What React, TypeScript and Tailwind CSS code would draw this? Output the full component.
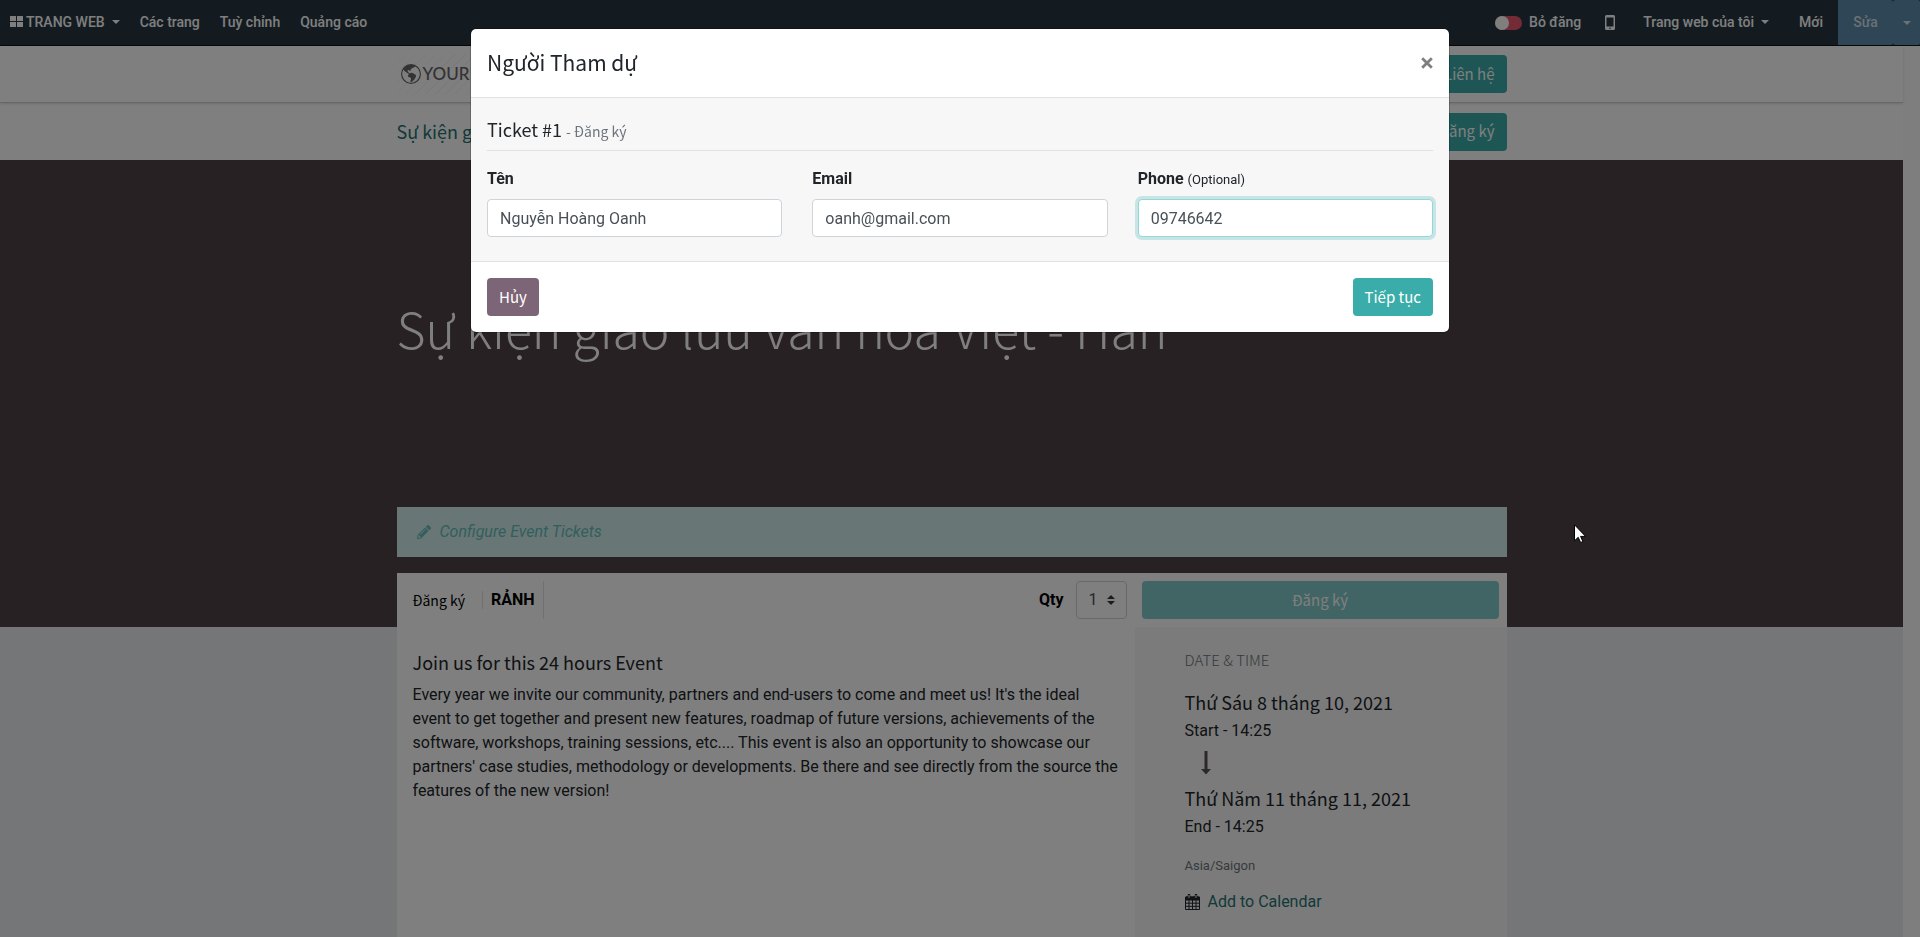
import React from "react";
import { BsGlobeAmericas } from "react-icons/bs";
import { FaPencilAlt } from "react-icons/fa";

const display = "font-['Noto_Sans_CJK_SC',sans-serif]";
const heading = "pb-0.5 text-lg leading-[22px]";
const buttonText = "text-[15px]";

function Caret() {
  return (
    <span
      aria-hidden="true"
      className="ml-[7px] inline-block h-0 w-0 border-x-4 border-t-4 border-x-transparent border-t-current"
    />
  );
}

function TopBar() {
  return (
    <nav className="flex h-[46px] items-stretch justify-between border-b border-[#0c1419] bg-[#263642] text-sm font-medium text-white">
      <div className="flex items-center gap-5 pl-2.5 pb-0.5">
        <button className="flex items-center">
          <svg aria-hidden="true" className="mr-[3px] h-[11px] w-[13px]" viewBox="0 0 13 11" fill="currentColor">
            <path d="M0 0h6v5H0zM7 0h6v5H7zM0 6h6v5H0zM7 6h6v5H7z" />
          </svg>
          TRANG WEB
          <Caret />
        </button>
        <a href="#pages">Các trang</a>
        <a href="#customize">Tuỳ chỉnh</a>
        <a href="#promote">Quảng cáo</a>
      </div>
      <div className="flex items-center">
        <label className="flex items-center pb-0.5">
          <input type="checkbox" role="switch" className="peer sr-only" />
          <span className="mr-[7px] mt-0.5 flex h-3.5 w-[27px] rounded-full bg-[#e6586c]">
            <span className="h-3.5 w-3.5 rounded-full bg-white" />
          </span>
          Bỏ đăng
        </label>
        <button aria-label="Mobile preview" className="ml-6 mr-7">
          <svg className="h-[15px] w-[10px]" viewBox="0 0 10 15">
            <path
              fill="currentColor"
              fillRule="evenodd"
              d="M1.5 0h7A1.5 1.5 0 0 1 10 1.500v12A1.500 1.500 0 0 1 8.500 15h-7A1.500 1.500 0 0 1 0 13.500v-12A1.500 1.500 0 0 1 1.500 0zM1.500 2.500v9h7v-9zM5 12.500a.8.8 0 1 0 0 1.600.8.8 0 0 0 0-1.600z"
            />
          </svg>
        </button>
        <button className="flex items-center pb-0.5">
          Trang web của tôi
          <Caret />
        </button>
        <a href="#new" className="ml-[30px] mr-[15px] pb-0.5">
          Mới
        </a>
        <div className="flex h-full text-[#ffffffc0]">
          <button className="w-[55px] rounded-r-xs bg-[#5c8cac] pb-0.5">Sửa</button>
          <button
            aria-label="More edit options"
            className="flex w-[27px] items-center justify-center rounded-xs bg-[#5c8cac]"
          >
            <span className="h-0 w-0 border-x-4 border-t-4 border-x-transparent border-t-current" />
          </button>
        </div>
      </div>
    </nav>
  );
}

function PageHeader() {
  return (
    <header className="relative border-b border-[#cfcfcf] bg-white shadow-sm">
      <div className="mx-auto flex h-14 w-full max-w-[1110px] items-center justify-between">
        <a
          href="#home"
          className="flex h-10 items-center gap-0.5 bg-[repeating-linear-gradient(135deg,#fff_0_6px,#f6f6f6_6px_7px)] px-1 font-['Lato',sans-serif] text-[17px] font-medium text-[#666]"
        >
          <BsGlobeAmericas aria-hidden="true" className="h-5 w-5" />
          YOUR LOGO
        </a>
        <a href="#contact" className={`${display} ${buttonText} flex h-[38px] items-center rounded bg-[#3aadaa] px-3 text-white`}>
          Liên hệ
        </a>
      </div>
    </header>
  );
}

function EventBar() {
  return (
    <div className="bg-white">
      <div className="mx-auto flex h-[57px] w-full max-w-[1110px] items-center justify-between">
        <a href="#event" className={`${display} ${heading} text-[#267372]`}>
          Sự kiện giao lưu văn hóa Việt - Hàn
        </a>
        <button className={`${display} ${buttonText} h-[38px] rounded bg-[#3aadaa] px-3 text-white`}>Đăng ký</button>
      </div>
    </div>
  );
}

function EventDate({ date, time }: { date: string; time: string }) {
  return (
    <div>
      <h5 className={`${display} ${heading} mb-[3px]`}>{date}</h5>
      <p className="text-base leading-[26px]">{time}</p>
    </div>
  );
}

function EventPage() {
  return (
    <main className="flex flex-1 flex-col bg-[linear-gradient(#4e4248_467px,#e9ecef_467px)]">
      <div className="mx-auto flex w-full max-w-[1110px] flex-1 flex-col">
        <h1 className={`${display} flex h-[347px] items-center pb-3 text-[50px] font-light text-white`}>
          Sự kiện giao lưu văn hóa Việt - Hàn
        </h1>
        <a href="#tickets" className="flex h-[50px] items-center gap-[9px] bg-[#d1eeed] px-5 text-base italic text-[#66bdba]">
          <FaPencilAlt aria-hidden="true" className="h-3.5 w-3.5" />
          Configure Event Tickets
        </a>
        <section className="mt-4 flex flex-1 flex-col bg-white text-[#212529]">
          <form className="flex h-[54px] items-center justify-between p-2">
            <div className="flex items-center pl-2 text-black">
              <span className={`${display} text-sm`}>Đăng ký</span>
              <span className="ml-[17px] h-[18px] border-l border-[#dee2e6]" />
              <span className="flex h-[38px] items-center border-r border-[#dee2e6] px-2 font-bold">RẢNH</span>
            </div>
            <div className="flex items-center">
              <label htmlFor="qty" className="mr-3 font-bold text-black">
                Qty
              </label>
              <span className="relative flex">
                <select
                  id="qty"
                  defaultValue="1"
                  className="h-[38px] w-[51px] appearance-none rounded border border-[#ced4da] bg-white pl-3 text-[#495057]"
                >
                  <option>1</option>
                  <option>2</option>
                  <option>3</option>
                </select>
                <svg aria-hidden="true" className="pointer-events-none absolute right-3 top-3.5 h-2.5 w-2" viewBox="0 0 4 5">
                  <path fill="#343a40" d="M2 0L0 2h4zm0 5L0 3h4z" />
                </svg>
              </span>
              <button
                type="button"
                className={`${display} ${buttonText} ml-[15px] h-[38px] w-[357px] rounded bg-[#83cac9] text-white`}
              >
                Đăng ký
              </button>
            </div>
          </form>
          <div className="flex flex-1">
            <article className="flex-1 px-4 pt-6">
              <h2 className={`${display} ${heading} mb-2`}>Join us for this 24 hours Event</h2>
              <p className="text-base leading-6">
                Every year we invite our community, partners and end-users to come and meet us! It's the ideal event to get
                together and present new features, roadmap of future versions, achievements of the software, workshops,
                training sessions, etc.... This event is also an opportunity to showcase our partners' case studies,
                methodology or developments. Be there and see directly from the source the features of the new version!
              </p>
            </article>
            <aside className="w-[372px] bg-[#f7f7f7] pt-6 pr-4 pl-[50px]">
              <h6 className={`${display} mb-5 pb-0.5 text-[15px] leading-[18px] font-light text-[#6c757d]`}>DATE &amp; TIME</h6>
              <EventDate date="Thứ Sáu 8 tháng 10, 2021" time="Start - 14:25" />
              <svg aria-hidden="true" className="mt-[7px] mb-3 ml-[15px] h-6 w-3" viewBox="0 0 12 24" fill="#5b5357">
                <path d="M4.500 0h3v18H11L6 23.500 1 18h3.500z" />
              </svg>
              <EventDate date="Thứ Năm 11 tháng 11, 2021" time="End - 14:25" />
              <p className="mt-4 mb-3.5 text-[13px] text-[#6c757d]">Asia/Saigon</p>
              <a href="#calendar" className="flex items-center gap-2 text-base text-[#267372]">
                <svg aria-hidden="true" className="h-4 w-[15px]" viewBox="0 0 15 16">
                  <path d="M1 2.500h13V6H1z" fill="#212529" />
                  <path
                    d="M.5 3h14v12.500H.5zM.5 6h14M.5 9.200h14M.5 12.300h14M4 6v9.500M7.500 6v9.500M11 6v9.500"
                    fill="none"
                    stroke="#212529"
                  />
                  <path d="M4 1v3M11 1v3" stroke="#212529" strokeWidth="2.500" strokeLinecap="round" />
                  <path d="M4 1v3M11 1v3" stroke="#f7f7f7" strokeWidth="1" />
                </svg>
                Add to Calendar
              </a>
            </aside>
          </div>
        </section>
      </div>
    </main>
  );
}

const fieldClass =
  "mt-2 block h-[38px] w-full rounded border border-[#ced4da] bg-white px-3 text-base text-[#495057] outline-none";

function AttendeeDialog() {
  return (
    <div className="fixed inset-0 bg-black/50 px-4 pt-7">
      <form
        role="dialog"
        aria-labelledby="attendee-title"
        className="mx-auto max-w-[980px] overflow-hidden rounded-md border border-black/20 bg-white bg-clip-padding text-[#212529]"
      >
        <div className="flex h-[69px] items-center justify-between border-b border-[#dee2e6] px-4">
          <h4 id="attendee-title" className={`${display} text-[21px]`}>
            Người Tham dự
          </h4>
          <button type="button" aria-label="Close" className="text-[#7f7f7f]">
            <svg className="h-3 w-3" viewBox="0 0 12 12" stroke="currentColor" strokeWidth="2.800">
              <path d="M1.200 1.200l9.600 9.600M10.800 1.200l-9.600 9.600" />
            </svg>
          </button>
        </div>
        <div className="border-b border-[#dee2e6] bg-[#f7f7f7] px-4 pt-5 pb-6">
          <h5 className={`${display} border-b border-[#dee2e6] pb-2.5 text-lg leading-[22px]`}>
            Ticket #1 <small className="text-sm leading-none text-[#6c757d]">- Đăng ký</small>
          </h5>
          <div className="grid grid-cols-3 gap-[30px] pt-4">
            <label className="font-bold">
              Tên
              <input type="text" defaultValue="Nguyễn Hoàng Oanh" className={`${fieldClass} font-normal`} />
            </label>
            <label className="font-bold">
              Email
              <input type="email" defaultValue="oanh@gmail.com" className={`${fieldClass} font-normal`} />
            </label>
            <label className="font-bold">
              Phone <small className="text-[13px] font-normal">(Optional)</small>
              <input
                type="tel"
                defaultValue="09746642"
                className={`${fieldClass} border-[#8ddad8]! font-normal ring-3 ring-[#3aadaa]/25`}
              />
            </label>
          </div>
        </div>
        <div className={`${display} flex items-center justify-between p-4 text-white`}>
          <button type="button" className={`${buttonText} h-[38px] rounded bg-[#7c6576] px-3`}>
            Hủy
          </button>
          <button type="submit" className={`${buttonText} h-[38px] rounded bg-[#3aadaa] px-3`}>
            Tiếp tục
          </button>
        </div>
      </form>
    </div>
  );
}

function Pointer() {
  return (
    <svg aria-hidden="true" className="pointer-events-none fixed top-[524px] left-[1574px] h-[19px] w-3" viewBox="0 0 12 19">
      <path d="M.5 .8v16l3.700-3.500 2.400 5.200 2.300-1-2.300-5.100h5z" fill="#fff" stroke="#000" />
    </svg>
  );
}

export default function App() {
  return (
    <div className="flex h-screen flex-col overflow-hidden font-['Roboto',sans-serif]">
      <TopBar />
      <div className="flex min-h-0 flex-1">
        <div className="flex flex-1 flex-col">
          <PageHeader />
          <EventBar />
          <EventPage />
        </div>
        <div className="w-[17px] bg-[#fcfcfc]" />
      </div>
      <AttendeeDialog />
      <Pointer />
    </div>
  );
}
